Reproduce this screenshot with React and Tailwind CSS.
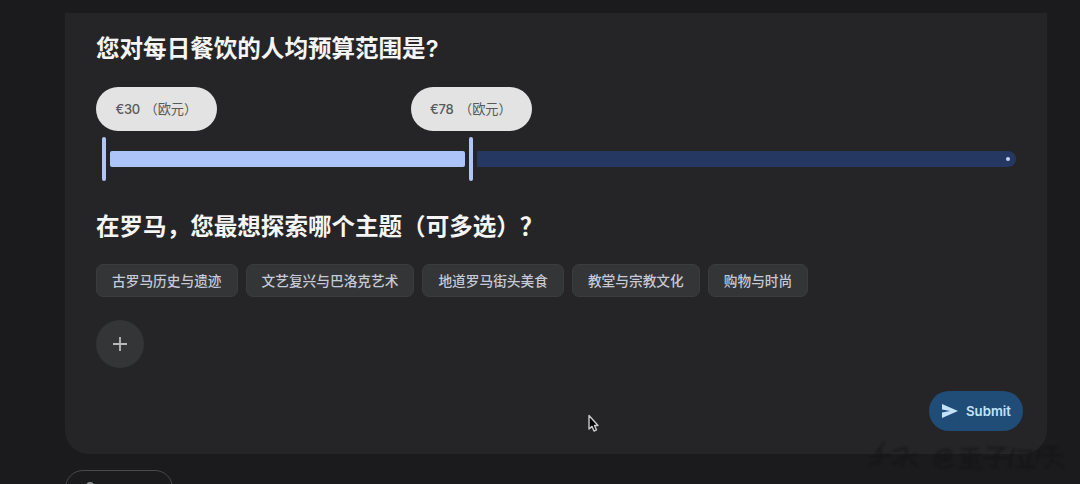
import React, { useState } from 'react';

const THEMES = ['古罗马历史与遗迹', '文艺复兴与巴洛克艺术', '地道罗马街头美食', '教堂与宗教文化', '购物与时尚'];

function PriceBubble({ amount }) {
  return (
    <div className="flex h-[44px] w-[121px] items-center rounded-full bg-[#e3e3e3] pt-[2px] pl-[19.5px] text-[13.2px] text-[#58595b]">
      <span className="w-[29px] font-['Inter',sans-serif] text-[13px] font-medium tracking-[-0.3px]">€{amount}</span>
      <span>（欧元）</span>
    </div>
  );
}

function BudgetSlider() {
  return (
    <div className="mt-[22px]">
      <div className="flex gap-[193.5px]">
        <PriceBubble amount={30} />
        <PriceBubble amount={78} />
      </div>
      <div className="mt-[5px] flex h-[45px] items-center pl-[6px]">
        <div className="h-[44px] w-[4px] rounded-full bg-[#b0c6f6]" />
        <div className="ml-[4px] h-[16px] w-[355px] rounded-[2px] bg-[#adc4f8]" />
        <div className="ml-[4px] h-[44px] w-[4px] rounded-full bg-[#b0c6f6]" />
        <div className="ml-[4px] flex h-[16px] w-[539px] items-center justify-end rounded-l-[2px] rounded-r-full bg-[#253861] pr-[6px]">
          <div className="size-[4px] rounded-full bg-[#c5d5fb]" />
        </div>
      </div>
    </div>
  );
}

// 右下角的暗色模糊印记
function Smudge() {
  return (
    <svg className="pointer-events-none absolute top-[438px] left-[864px] blur-[1.2px]" width="208" height="36" viewBox="0 0 208 36" fill="none" stroke="#111112" strokeWidth="2.6" strokeLinecap="round" opacity="0.5">
      <path d="M20 5L12 15M8 19L26 17M17 13L15 26M6 27L14 23M30 13L42 10M34 20L53 17M43 12L38 28M29 26L36 23M46 22L53 28" />
      <path d="M84 12C70 10 66 27 78 29M80 17C74 18 74 24 80 23L83 15V22C87 24 90 13 84 12M82 29L88 27" />
      <path d="M98 11H114M96 17H116M100 21H113V25H100ZM97 30H117M106 12V29M124 10H140L132 16V29L127 28M120 20H143M150 11L146 20V30M154 13H168M156 18L158 26M166 17L163 28M153 29H170M176 12L173 22M181 10H192M179 17H197M188 11V23L182 30M189 23L199 29" />
    </svg>
  );
}

export default function App() {
  const [selected, setSelected] = useState([]);

  const toggleTheme = (theme) => {
    setSelected((prev) => (prev.includes(theme) ? prev.filter((t) => t !== theme) : [...prev, theme]));
  };

  return (
    <div className="relative h-[484px] w-[1080px] overflow-hidden bg-[#1b1b1d] px-[65px] pt-[13px] font-['Lato','Noto_Sans_CJK_SC',sans-serif]">
      <main className="flex h-[441px] w-[982px] flex-col rounded-b-[24px] bg-[#252527] pl-[31px]">
        <h2 className="mt-[17px] h-[35px] whitespace-nowrap font-['Noto_Sans_CJK_SC',sans-serif] text-[23.55px] leading-[35px] font-bold text-[#f5f5f5]">
          您对每日餐饮的人均预算范围是<span className="font-['Inter',sans-serif] font-semibold">?</span>
        </h2>
        <BudgetSlider />

        <h2 className="mt-[27px] h-[35px] whitespace-nowrap font-['Noto_Sans_CJK_SC',sans-serif] text-[23.55px] leading-[35px] font-bold text-[#f5f5f5]">
          在罗马，您最想探索哪个主题（可多选）？
        </h2>
        <div className="mt-[21px] flex gap-[8px]">
          {THEMES.map((theme) => (
            <button
              key={theme}
              type="button"
              onClick={() => toggleTheme(theme)}
              className={`h-[33px] rounded-[7px] border px-[15px] pt-[2px] text-[13.7px] font-medium whitespace-nowrap text-[#c6c9d6] ${selected.includes(theme) ? 'border-[#adc4f8] bg-[#253861]' : 'border-[#3b3c3e] bg-[#333537]'}`}
            >
              {theme}
            </button>
          ))}
        </div>

        <button type="button" title="添加" className="mt-[23px] flex size-[48px] items-center justify-center rounded-full bg-[#333537]">
          <svg width="16" height="16" viewBox="0 0 16 16" fill="none" stroke="#b8babc" strokeWidth="1.8">
            <path d="M8 1v14M1 8h14" />
          </svg>
        </button>

        <button type="button" className="mt-[23px] mr-[24px] flex h-[40px] w-[94px] items-center gap-[7px] self-end rounded-full bg-[#204c78] pl-[12px] text-[#c3e3fb]">
          <svg width="18" height="16" viewBox="0 0 18 16" fill="currentColor">
            <path d="M1 1L17 8L1 15V9.6L9 8L1 6.4Z" />
          </svg>
          <span className="pt-[2px] font-['Inter',sans-serif] text-[13.2px] font-semibold">Submit</span>
        </button>
      </main>

      {/* 下一个操作按钮，只露出上边缘 */}
      <div className="mt-[16px] flex h-[36px] w-[108px] rounded-full border border-[#48494b] pt-[11px] pl-[20px]">
        <div className="h-[8px] w-[8px] rounded-full border-2 border-[#909194]" />
      </div>

      <Smudge />

      <svg className="absolute top-[414px] left-[587px]" width="12" height="19" viewBox="0 0 12 19">
        <path d="M2 1.5V15L5 12.4L7 17L9.5 15.9L7.5 11.5H11Z" fill="#050505" stroke="#c9c9c9" strokeWidth="1.4" strokeLinejoin="round" />
      </svg>
    </div>
  );
}
